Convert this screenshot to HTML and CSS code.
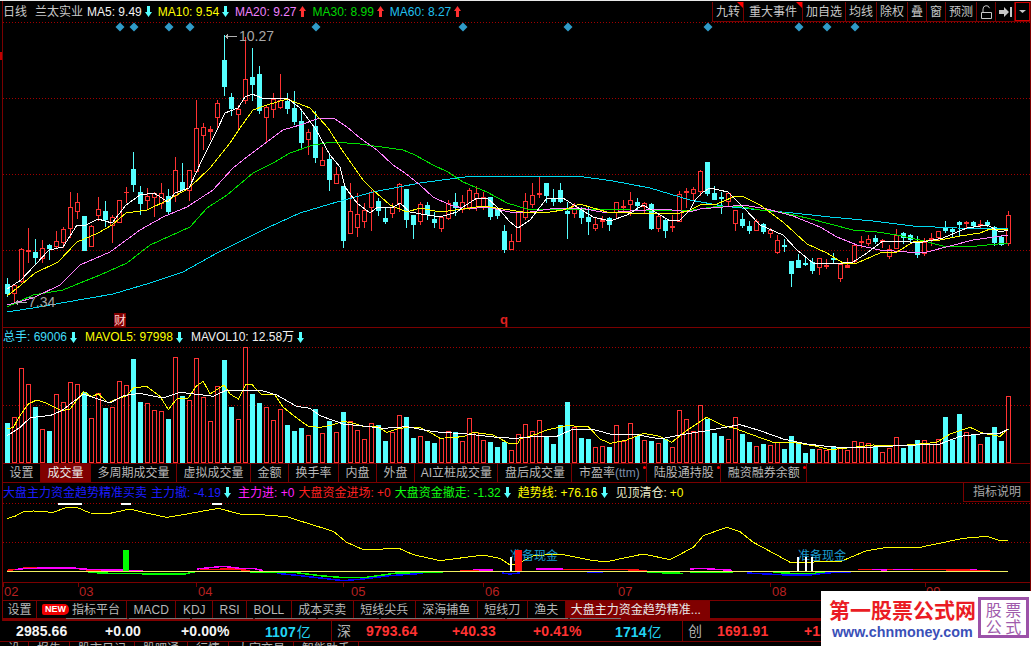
FILE: index.html
```html
<!DOCTYPE html>
<html lang="zh">
<head>
<meta charset="utf-8">
<title>兰太实业 日线</title>
<link rel="stylesheet" href="styles.css">
</head>
<body>
<svg class="defs" width="0" height="0" aria-hidden="true">
  <symbol id="arr" viewBox="0 0 7 11"><path d="M2 0h3v6h2L3.500 11 0 6h2z"/></symbol>
</svg>
<div class="page">
  <div class="topline"></div>
  <div class="left-mark"></div>
  <div class="main">
    <header class="head">
      <div class="legend">
        <span class="plain">日线</span><span class="plain name">兰太实业</span>
        <span class="item white">MA5: 9.49<svg class="arrow cyan"><use href="#arr"/></svg></span>
        <span class="item yellow">MA10: 9.54<svg class="arrow cyan"><use href="#arr"/></svg></span>
        <span class="item pink">MA20: 9.27<svg class="arrow up"><use href="#arr"/></svg></span>
        <span class="item green">MA30: 8.99<svg class="arrow up"><use href="#arr"/></svg></span>
        <span class="item sky">MA60: 8.27<svg class="arrow up"><use href="#arr"/></svg></span>
      </div>
      <div class="btns">
        <span class="btn flag">九转</span>
        <span class="btn btn-wide flag">重大事件</span>
        <span class="btn">加自选</span>
        <span class="btn">均线</span>
        <span class="btn">除权</span>
        <span class="btn">叠</span>
        <span class="btn">窗</span>
        <span class="btn">预测</span>
        <span class="btn btn-icon"><svg class="ico" viewBox="0 0 13 14"><path d="M1.500 7.500h10v6h-10zM3 7.500V4a3.300 3.300 0 0 1 6.500-.8" /></svg></span>
        <span class="btn btn-icon"><svg class="ico-solid" viewBox="0 0 13 10"><path d="M0 3h5V0l5 5-5 5V7H0zM11 0h2v10h-2z"/></svg></span>
        <span class="btn btn-drop"><svg class="ico-drop" viewBox="0 0 7 3"><path d="M0 0h7L3.500 3z"/></svg></span>
      </div>
    </header>
    <svg id="price" class="chart chart-price" viewBox="3 22 1027 305"></svg>

    <div class="legend legend-vol">
      <span class="item cyan">总手: 69006<svg class="arrow cyan"><use href="#arr"/></svg></span>
      <span class="item yellow">MAVOL5: 97998<svg class="arrow cyan"><use href="#arr"/></svg></span>
      <span class="item white">MAVOL10: 12.58万<svg class="arrow cyan"><use href="#arr"/></svg></span>
    </div>
    <svg id="vol" class="chart chart-vol" viewBox="3 346 1027 118"></svg>

    <nav class="tabs">
      <span class="tab">设置</span>
      <span class="tab on">成交量</span>
      <span class="tab">多周期成交量</span>
      <span class="tab">虚拟成交量</span>
      <span class="tab">金额</span>
      <span class="tab">换手率</span>
      <span class="tab">内盘</span>
      <span class="tab">外盘</span>
      <span class="tab tab-tight">AI立桩成交量</span>
      <span class="tab">盘后成交量</span>
      <span class="tab dot">市盈率<i class="dim">(ttm)</i></span>
      <span class="tab dot">陆股通持股</span>
      <span class="tab dot">融资融券余额</span>
    </nav>

    <div class="indhead">
      <div class="legend legend-ind">
        <span class="ititle blue">大盘主力资金趋势精准买卖</span>
        <span class="item blue after-a">主力撤: -4.19<svg class="arrow cyan"><use href="#arr"/></svg></span>
        <span class="item magenta">主力进: +0</span>
        <span class="item red">大盘资金进场: +0</span>
        <span class="item lime after-b">大盘资金撤走: -1.32<svg class="arrow cyan"><use href="#arr"/></svg></span>
        <span class="item yellow after-c">趋势线: +76.16<svg class="arrow cyan"><use href="#arr"/></svg></span>
        <span class="item cream">见顶清仓: <b class="yellow thin">+0</b></span>
      </div>
      <span class="explain">指标说明</span>
    </div>
    <svg id="ind" class="chart chart-ind" viewBox="3 503 1027 80"></svg>
    <svg id="axis" class="chart chart-axis" viewBox="3 583 1027 18"></svg>

    <nav class="tabs tabs-bottom">
      <span class="tab tab-b tab-first">设置</span>
      <span class="tab tab-b tab-new"><em class="new">NEW</em>指标平台</span>
      <span class="tab tab-b">MACD</span>
      <span class="tab tab-b">KDJ</span>
      <span class="tab tab-b">RSI</span>
      <span class="tab tab-b">BOLL</span>
      <span class="tab tab-b">成本买卖</span>
      <span class="tab tab-b">短线尖兵</span>
      <span class="tab tab-b">深海捕鱼</span>
      <span class="tab tab-b">短线刀</span>
      <span class="tab tab-b">渔夫</span>
      <span class="tab tab-b on on-white">大盘主力资金趋势精准...</span>
    </nav>
    <div class="scroll"><div class="thumb"></div></div>
  </div>

  <div class="status">
    <span class="val wht">2985.66</span>
    <span class="val wht">+0.00</span>
    <span class="val wht">+0.00%</span>
    <span class="val cy">1107<i class="yi">亿</i></span>
    <span class="mkt">深</span>
    <span class="val rd">9793.64</span>
    <span class="val rd">+40.33</span>
    <span class="val rd">+0.41%</span>
    <span class="val cy">1714<i class="yi">亿</i></span>
    <span class="mkt">创</span>
    <span class="val rd">1691.91</span>
    <span class="val rd">+12.60</span>
  </div>
  <div class="foot">
    <span class="fc">设</span><span class="fc">报告</span><span class="fc">股市日记</span><span class="fc">股吧通</span><span class="fc">行情</span><span class="fc">大宗交易</span><span class="fc">智能助手</span>
  </div>

  <aside class="mark">
    <div class="mark-text">
      <div class="mark-title">第一股票公式网</div>
      <div class="mark-url">www.chnmoney.com</div>
    </div>
    <div class="mark-box"><span>股 票</span><span>公 式</span></div>
  </aside>
</div>
<script src="chart.js"></script>
</body>
</html>
```

FILE: styles.css
```css
* { box-sizing: border-box; }
html, body { margin: 0; padding: 0; background: #000; }
body { font: 12px/1 "Liberation Sans", "Noto Sans CJK SC", sans-serif; color: #c8c8c8; }
.defs { position: absolute; }
.page { position: relative; width: 1031px; height: 646px; overflow: hidden; background: #000; }
.topline { height: 1px; background: #e8e8e8; }
.left-mark { position: absolute; left: 0; top: 52px; width: 2px; height: 8px; background: #c00000; }

.main { margin-left: 2px; border-left: 1px solid #7a0000; border-right: 1px solid #7a0000; width: 1029px; height: 620px; }
.head { height: 21px; display: flex; justify-content: space-between; }
.legend { display: flex; align-items: center; white-space: nowrap; }
.head .legend { gap: 6px; }
.plain { color: #c8c8c8; }
.name { margin-left: 2px; margin-right: -2px; }
.item { display: inline-flex; align-items: center; gap: 3px; }
.arrow { width: 7px; height: 11px; fill: #ff3030; }
.arrow.cyan { fill: #55ffff; }
.arrow.up { transform: rotate(180deg); }
.white { color: #f2f2f2; }
.yellow { color: #ffff00; }
.pink { color: #f080ff; }
.green { color: #00d800; }
.sky { color: #20c0f0; }
.cyan { color: #40dcf8; }
.blue { color: #1c1cff; }
.magenta { color: #ff20ff; }
.red { color: #ff2020; }
.lime { color: #10ff10; }
.cream { color: #e8e8c8; }
.thin { font-weight: 400; }

.btns { display: flex; height: 20px; margin-top: 1px; border-left: 1px solid #7a0000; border-bottom: 1px solid #7a0000; }
.btn { position: relative; display: flex; align-items: center; justify-content: center; padding: 0 3px; border-right: 1px solid #7a0000; color: #c8c8c8; }
.btn-wide { padding: 0 5px; }
.flag::after { content: ""; position: absolute; top: 0; right: 0; border-top: 6px solid #ff0000; border-left: 6px solid transparent; }
.btn-icon { width: 19px; padding: 0; }
.btn-drop { width: 15px; padding: 0; border: 1px solid #d00000; }
.ico { width: 13px; height: 14px; fill: none; stroke: #c8c8c8; stroke-width: 1; }
.ico-solid { width: 13px; height: 10px; fill: #c8c8c8; }
.ico-drop { width: 7px; height: 3px; fill: #c8c8c8; }

.chart { display: block; width: 1027px; }
.chart-price { height: 305px; }
.chart-vol { height: 118px; }
.chart-ind { height: 80px; }
.chart-axis { height: 18px; }

.legend-vol { height: 18px; gap: 8px; border-top: 1px solid #7a0000; padding-top: 1px; }
.legend-ind { gap: 4px; }
.after-a { margin-right: 3px; }
.after-b { margin-right: 3px; }
.after-c { margin-right: 4px; }

.tabs { display: flex; height: 20px; border-top: 1px solid #7a0000; border-bottom: 1px solid #7a0000; }
.tab { position: relative; display: flex; align-items: center; padding: 0 6.500px; border-right: 1px solid #7a0000; color: #b8b8b8; white-space: nowrap; }
.tab-tight { padding: 0 5.500px; }
.tab.on { background: #800000; color: #e8e8e8; }
.dim { font-style: normal; color: #7c8ca8; }
.dot::after { content: ""; position: absolute; top: 2px; right: 0; width: 3px; height: 3px; border-radius: 50%; background: #ff0000; }
.indhead { height: 19px; display: flex; justify-content: space-between; align-items: flex-start; }
.indhead .legend { height: 19px; }
.explain { width: 67px; height: 20px; margin-top: -1px; display: flex; align-items: center; justify-content: center; border: 1px solid #7a0000; border-right: 0; color: #a8a8a8; }

.tabs-bottom { height: 18px; border-bottom: 0; }
.tab-first { padding: 0 4.500px; }
.tab-new { padding: 0 6px 0 5px; gap: 3px; }
.on-white { width: 144px; padding: 0 0 0 5px; color: #f4f4f4; border-right: 0; }
.new { display: inline-block; width: 27px; height: 11px; border-radius: 2px 5px 5px 2px; background: #f00000; color: #fff; font: 700 9px/11px "Liberation Sans", sans-serif; text-align: center; }
.scroll { height: 3px; background: #800000; }
.thumb { margin-left: 63px; width: 555px; height: 1px; background: repeating-linear-gradient(90deg, #777 0 61px, #222 61px 63px); }

.status { height: 21px; display: grid; grid-template-columns: 89px 76px 84px 66px 35px 86px 81px 82px 67px 35px 87px 1fr; padding-left: 16px; align-items: center; border-bottom: 1px solid #7a0000; white-space: nowrap; }
.val { font: 700 14px/1 "Liberation Sans", sans-serif; letter-spacing: 0.100px; }
.wht { color: #f4f4f4; }
.rd { color: #ff3232; }
.cy { color: #22d4f4; }
.yi { font: 400 14px/1 "Noto Sans CJK SC", sans-serif; margin-left: 1px; }
.mkt { height: 20px; display: flex; align-items: center; padding-left: 5px; border-left: 1px solid #7a0000; font-size: 14px; color: #b0b0b0; }
.foot { height: 4px; display: flex; overflow: hidden; color: #b0b0b0; }
.fc { padding: 1px 8px 0; border-right: 1px solid #7a0000; white-space: nowrap; }

.mark { position: absolute; left: 821px; top: 591px; width: 210px; height: 55px; display: flex; background: #fff; padding: 6px 2px 0 8px; justify-content: space-between; }
.mark-text { width: 148px; }
.mark-title { font: 700 21px/24px "Noto Sans CJK SC", sans-serif; color: #ea1c24; white-space: nowrap; }
.mark-url { margin-top: 2px; padding-left: 3px; font: 700 14.300px/18px "Liberation Sans", sans-serif; color: #3a50b8; white-space: nowrap; }
.mark-box { width: 51px; height: 41px; border: 3px solid #9c52a8; display: flex; flex-direction: column; align-items: center; justify-content: center; color: #a05cac; font: 400 16px/17px "Noto Sans CJK SC", sans-serif; white-space: nowrap; }

/* chart primitives, created by chart.js */
.crisp { shape-rendering: crispEdges; }
.dots { stroke: #a00000; stroke-width: 1; stroke-dasharray: 1 2; }
.rule { stroke: #7a0000; stroke-width: 1; }
.up-body { fill: #000; stroke: #ff3232; stroke-width: 1; }
.up-wick { stroke: #ff3232; stroke-width: 1; }
.up-fill { fill: #ff3232; }
.dn-body { fill: #55ffff; }
.dn-wick { stroke: #55ffff; stroke-width: 1; }
.ln { fill: none; stroke-width: 1; }
.ln-white { stroke: #fff; }
.ln-yellow { stroke: #ffff00; }
.ln-pink { stroke: #ff80ff; }
.ln-green { stroke: #00e000; }
.ln-sky { stroke: #00d8f0; }
.ln-red { stroke: #ff1010; stroke-width: 1.500; }
.ln-mag { stroke: #ff00ff; stroke-width: 1.500; }
.ln-lime { stroke: #00ff00; stroke-width: 1.500; }
.ln-blue { stroke: #0000ff; stroke-width: 1.500; }
.base { stroke: #f0f060; stroke-width: 1.500; }
.diamond { fill: #2f9bc8; }
.lbl { font: 14px "Liberation Sans", sans-serif; fill: #a8a8a8; }
.lbl-arrow { stroke: #b0b0b0; fill: none; }
.cai-bg { fill: #800000; }
.cai { font: 12px "Noto Sans CJK SC", sans-serif; fill: #ffd0d0; }
.q { font: 700 13px "Liberation Sans", sans-serif; fill: #e02020; }
.cash { font: 12px "Noto Sans CJK SC", sans-serif; fill: #1a9ccf; }
.bar-w { fill: #fff; }
.bar-g { fill: #00ff00; }
.bar-r { fill: #ff1010; }
.axis-t { font: 13px "Liberation Sans", sans-serif; fill: #b82020; }
```

FILE: chart.js
```js
const NS = 'http://www.w3.org/2000/svg';
function el(parent, tag, cls, attrs, text) {
  const n = document.createElementNS(NS, tag);
  n.setAttribute('class', cls);
  for (const k in attrs) n.setAttribute(k, attrs[k]);
  if (text) n.textContent = text;
  parent.appendChild(n);
  return n;
}
function dots(svg, y) {
  el(svg, 'line', 'dots crisp', { x1: 3, x2: 1030, y1: y + 0.5, y2: y + 0.5 });
}
function poly(svg, cls, pts) {
  el(svg, 'polyline', 'ln crisp ' + cls, { points: pts.map(p => p[0] + ',' + p[1]).join(' ') });
}
function zoomPts(list, ox, oy) {
  const out = [];
  for (let i = 0; i < list.length; i += 2) out.push([ox + list[i] / 3, oy + list[i + 1] / 3]);
  return out;
}

/* candles: [up, high, top, bottom, low] */
const z = (base, rows) => rows.map(r => [r[0], base + r[1] / 3, base + r[2] / 3, base + r[3] / 3, base + r[4] / 3]);
const candles = z(130, [
[0,445,462,488,498],[1,462,464,490,515],[1,355,357,452,455],[1,295,360,362,395],[0,328,366,381,398],
[1,330,355,383,395],[0,343,345,353,386],[1,302,334,347,352],[1,292,298,335,352],[1,186,232,295,320],
[1,190,217,242,263],[0,258,258,359,359],[1,285,289,347,347],[1,201,238,254,270],[0,213,243,267,288],
[1,255,262,285,335],[1,211,211,275,275],[1,172,185,187,217],[0,67,118,163,183],[0,168,186,218,252],
[1,173,198,211,235],[1,187,188,202,258],[1,160,190,220,233],[0,178,198,243,252],[1,82,121,195,213],
[0,100,157,177,180],[1,120,121,180,210]]).concat([
[1,100,128,171,172],[1,123,127,135,149],[1,126,129,131,139],[1,100,103,117,128],[0,35,60,86,95],
[0,93,97,108,115],[1,105,109,114,128],[1,37,79,100,103],[0,48,77,84,100],[0,66,74,110,113],
[1,105,107,117,141],[1,93,99,109,117],[1,74,100,107,108],[0,93,101,108,113],[0,91,108,121,124],
[0,111,121,142,147],[1,129,132,139,154],[0,111,126,157,162],[1,147,160,165,165],[0,154,159,179,190],
[1,167,174,183,183]]).concat(z(150, [
[0,108,108,270,290],[1,100,183,250,250],[1,130,192,230,258],[1,160,180,212,232],[1,120,126,170,240],
[0,143,153,180,195],[0,175,204,212,220],[1,160,170,188,200],[1,100,103,160,183],[0,117,117,207,232],
[0,195,195,222,264],[1,155,162,212,222],[0,155,165,192,208],[0,187,207,216,232],[1,197,202,233,242],
[1,150,158,203,208],[0,128,155,172,195],[1,135,157,178,185],[1,113,121,172,178],[1,108,130,143,180],
[1,125,142,172,178],[0,140,142,198,206],[0,170,177,195,205],[0,225,243,297,305],[1,252,273,296,296],
[1,185,187,272,272],[1,130,153,202,208],[1,100,135,162,170],[1,82,129,132,140],[0,98,98,135,155],
[0,118,147,152,165],[0,98,120,153,155],[0,155,182,188,264],[1,160,165,190,200],[0,170,178,202,218],
[0,170,201,213,252],[1,205,223,233,240],[1,198,207,212,232],[0,200,204,221,240],[1,156,157,185,205],
[1,150,167,170,180],[1,127,150,163,195],[0,145,156,165,180],[1,155,158,168,190],[0,160,163,234,238],
[1,195,198,235,243],[0,207,210,240,260],[1,195,229,232,242],[1,123,133,212,212],[1,115,123,127,170],
[1,110,118,128,150],[1,60,63,122,135],[0,36,36,130,135],[0,108,130,146,146],[0,127,142,144,188],
[1,125,130,152,165],[1,180,180,220,240],[0,190,208,225,232],[0,213,228,240,248],[1,208,214,240,240],
[0,220,222,243,248],[1,235,241,250,260],[1,255,271,307,308],[0,268,285,287,302],[0,334,334,369,407],
[0,312,331,350,350],[0,325,340,342,345],[0,325,337,360,370],[1,325,325,350,372],[1,326,345,348,354],
[0,310,325,327,340],[1,340,343,384,392],[1,325,345,350,350],[1,285,286,333,336],[1,258,272,275,292],
[1,255,268,278,285],[0,256,264,273,280],[1,266,270,272,290],[1,285,298,317,323],[1,238,256,295,295],
[0,246,250,262,278],[0,252,256,268,275],[0,258,275,311,320],[1,265,275,308,316],[1,250,263,271,285],
[1,243,244,261,270],[0,213,230,240,246],[0,230,236,243,262],[0,212,216,221,255],[1,212,217,220,234],
[0,212,216,224,232],[1,210,221,226,232],[0,210,216,222,228],[0,227,230,275,285],[0,258,261,283,286],
[1,183,196,280,285]]));

const MA = {
'ln-sky': [[7,312],[33,308],[67,302],[113,294],[150,283],[183,272],[217,253],[267,228],[300,213],[330,204],[373,192],[420,183],[457,178],[473,176],[577,176],[613,181],[650,188],[690,200],[723,206],[760,210],[793,213],[830,217],[873,221],[913,226],[957,228],[1008,229]],
'ln-green': [[7,307],[33,295],[63,290],[80,283],[100,275],[127,263],[150,245],[190,227],[207,208],[227,195],[253,173],[273,163],[290,153],[313,145],[333,142],[360,144],[403,150],[415,155],[433,165],[448,172],[463,182],[487,192],[507,203],[527,209],[563,210],[597,209],[630,210],[667,211],[693,210],[713,207],[737,206],[760,210],[780,212],[807,218],[830,224],[853,230],[877,232],[897,235],[920,240],[943,246],[977,246],[1008,243]],
'ln-pink': [[7,305],[33,298],[60,285],[80,265],[110,252],[140,230],[163,217],[187,207],[213,190],[233,168],[243,160],[267,142],[283,130],[300,125],[320,118],[335,119],[347,127],[360,138],[377,150],[393,165],[405,173],[420,185],[433,197],[450,205],[467,209],[487,207],[510,212],[530,212],[550,209],[580,208],[607,213],[630,211],[663,209],[690,212],[700,209],[723,207],[743,205],[767,209],[793,216],[820,227],[837,237],[857,245],[880,250],[907,252],[927,252],[950,246],[973,240],[1008,235]],
'ln-yellow': [[7,296],[21,285],[35,273],[58,262],[77,242],[98,233],[112,225],[126,213],[147,210],[168,200],[189,188],[210,168],[230,143],[240,128],[253,110],[267,105],[287,99],[310,108],[328,128],[342,150],[363,180],[373,190],[390,205],[407,212],[420,208],[440,212],[463,209],[483,206],[503,209],[523,212],[550,212],[563,210],[580,204],[593,208],[607,212],[630,213],[663,213],[677,214],[690,210],[700,205],[717,204],[733,197],[742,196],[760,205],[783,222],[807,244],[827,253],[843,263],[857,263],[880,253],[897,252],[913,242],[940,240],[960,236],[980,233],[990,229],[1008,229]],
'ln-white': [[7,289],[21,280],[35,265],[49,250],[63,247],[77,225],[84,226],[98,219],[112,223],[126,205],[140,195],[154,193],[168,202],[175,193],[189,188],[203,158],[217,130],[225,113],[238,108],[245,97],[252,94],[262,98],[273,98],[287,98],[300,108],[315,128],[330,155],[340,167],[345,187],[357,203],[370,213],[378,207],[392,208],[400,203],[410,212],[427,215],[440,217],[457,212],[463,207],[477,198],[487,198],[497,207],[510,222],[518,228],[530,220],[547,198],[563,198],[577,207],[593,217],[610,221],[627,215],[643,205],[657,213],[670,221],[680,220],[690,210],[695,200],[703,192],[710,188],[728,192],[743,207],[760,225],[783,235],[797,250],[813,263],[843,263],[853,262],[867,253],[883,241],[910,242],[923,242],[943,238],[967,228],[987,225],[1000,232],[1008,230]]
};

function drawCandle(svg, c, i) {
  const [up, hi, top, bot, lo] = c;
  const x = 5 + 7 * i, mid = x + 2.5;
  const t = Math.round(top), b = Math.round(bot);
  const wick = up ? 'up-wick crisp' : 'dn-wick crisp';
  el(svg, 'line', wick, { x1: mid, x2: mid, y1: Math.round(hi), y2: Math.round(lo) + 1 });
  if (b - t < 3) {
    el(svg, 'rect', (up ? 'up-fill' : 'dn-body') + ' crisp', { x: x, y: t, width: 5, height: Math.max(1, b - t + 1) });
  } else if (up) {
    el(svg, 'rect', 'up-body crisp', { x: x + 0.5, y: t + 0.5, width: 4, height: b - t });
  } else {
    el(svg, 'rect', 'dn-body crisp', { x: x, y: t, width: 5, height: b - t + 1 });
  }
}

/* price panel */
const price = document.getElementById('price');
[22, 98, 174, 250].forEach(y => dots(price, y));
candles.forEach((c, i) => drawCandle(price, c, i));
Object.keys(MA).forEach(k => poly(price, k, MA[k]));
[120, 134, 169, 190, 316, 463, 568, 708, 799, 827, 855].forEach(x => {
  el(price, 'path', 'diamond', { d: 'M' + x + ' 22.500l4.500 4.500-4.500 4.500-4.500-4.500z' });
});
el(price, 'path', 'lbl-arrow crisp', { d: 'M225.500 36.500H237M228 34.500l-2.500 2 2.500 2' });
el(price, 'text', 'lbl', { x: 239, y: 41 }, '10.27');
el(price, 'path', 'lbl-arrow crisp', { d: 'M15 302.500H27M18 300.500l-2.500 2 2.500 2' });
el(price, 'text', 'lbl', { x: 28, y: 307 }, '7.34');
el(price, 'rect', 'cai-bg crisp', { x: 114, y: 313, width: 12, height: 14 });
el(price, 'text', 'cai', { x: 114, y: 325 }, '财');
el(price, 'text', 'q', { x: 500, y: 324 }, 'q');

/* volume panel: tops in 3x zoom units, [up, top] */
const vol = document.getElementById('vol');
[348, 406].forEach(y => dots(vol, y));
const volA = 'c312 r295 r148 r196 c264 r331 c336 r226 r250 r190 r196 c220 r298 r223 c267 r265 r187 r199 c120 c249 r253 r274 r277 c300 r115 c231 r244 r118 r234 r307 r202 c123 c264 r301 r85 c225 c252 r265 r304 r271 c318 c336 c327 r349 c270 r343 c306 r340 c279 r307 r334 r361 r313 c318 c366 r340 r289 c294 c357 r352 c366 c372 r358 r337 c340 r367 r298 r340 r364 c369 c384 c369 r394 r346'.split(' ');
const volB = 'r136 r157 r124 c172 c195 c138 c70 r143 c177 c181 r205 r202 c205 r139 r187 r133 c171 r184 c186 r192 c180 r205 r92 r121 r156 r79 c120 c162 c171 r181 r115 c165 c189 r202 c195 r198 r190 c210 c172 c190 c222 c210 r210 r213 c204 r204 r213 r187 r190 r193 c202 r220 r208 r175 c207 c195 c183 r184 r195 r181 c114 c183 c105 r160 c166 r195 c174 c144 c186 r52'.split(' ');
const bars = volA.map(s => [s[0], Math.round(320 + +s.slice(1) / 3)]).concat(volB.map(s => [s[0], Math.round(380 + +s.slice(1) / 3)]));
bars.forEach((b, i) => {
  const x = 5 + 7 * i;
  if (b[0] === 'r') el(vol, 'rect', 'up-body crisp', { x: x + 0.5, y: b[1] + 0.5, width: 4, height: 463 - b[1] });
  else el(vol, 'rect', 'dn-body crisp', { x: x, y: b[1], width: 5, height: 464 - b[1] });
});
poly(vol, 'ln-yellow', zoomPts([22,330,40,325,60,290,85,255,110,243,140,253,185,275,210,270,250,218,275,232,295,225,325,252,350,240,380,230,400,207,440,202,480,232,505,272,530,240,565,237,590,200,610,187,630,225,672,198,690,225,715,240,737,197,757,198,785,227,825,228,850,265,890,297,925,322,960,325,1000,317,1030,307,1060,313,1090,322,1130,322,1160,340,1190,330,1220,325,1260,325,1290,340,1320,358,1390,353,1420,340,1480,348,1530,375,1555,372], 0, 320)
  .concat(zoomPts([0,180,50,165,80,153,140,140,205,143,240,180,270,193,320,183,370,163,420,172,455,190,500,155,560,115,610,140,650,150,690,165,760,190,820,190,880,200,930,212,1000,205,1060,198,1140,200,1220,193,1250,190,1290,165,1350,145,1390,163,1440,172,1465,150], 520, 380)));
poly(vol, 'ln-white', zoomPts([22,350,60,325,90,297,120,292,150,290,185,275,250,225,330,252,370,230,420,223,490,237,540,220,600,227,640,232,680,213,780,213,830,228,890,262,930,268,960,290,1030,315,1100,322,1150,328,1220,323,1300,338,1400,345,1500,356,1555,358], 0, 320)
  .concat(zoomPts([0,175,60,173,110,172,160,150,215,150,270,165,340,165,420,180,480,168,560,155,660,137,720,155,790,180,860,195,930,203,1000,207,1140,200,1260,195,1320,172,1380,165,1440,163,1465,150], 520, 380)));

/* indicator panel */
const ind = document.getElementById('ind');
[504, 543].forEach(y => dots(ind, y));
[[58, 24], [121, 10], [212, 10]].forEach(m => el(ind, 'rect', 'bar-w crisp', { x: m[0], y: 504, width: m[1], height: 2 }));
const lo = (c, list, ox, oy) => poly(ind, c, zoomPts(list, ox, oy));
lo('ln-lime', [265,280,330,283,480,285,555,285,585,278], 0, 480);
lo('ln-lime', [750,280,880,280,960,290,1030,296,1100,295,1190,282,1330,280], 0, 480);
lo('ln-lime', [380,160,490,163], 520, 520);
lo('ln-lime', [490,158,640,160], 520, 520);
lo('ln-lime', [760,160,850,165,930,160], 520, 520);
lo('ln-blue', [830,283,900,290,1030,305,1090,300,1170,290,1270,283], 0, 480);
lo('ln-blue', [1505,282,1530,285,1560,282], 0, 480);
lo('ln-blue', [200,159,250,160], 520, 520);
lo('ln-blue', [680,162,800,168,870,168,920,162,1000,158], 520, 520);
lo('ln-red', [22,274,60,270,80,265,115,267,225,267,250,272,330,275,350,277], 0, 480);
lo('ln-red', [600,272,700,270,750,275], 0, 480);
lo('ln-red', [1380,274,1480,274], 0, 480);
lo('ln-red', [130,152,215,151,300,151,380,155], 520, 520);
lo('ln-red', [1015,152,1265,152,1410,155], 520, 520);
lo('ln-mag', [45,272,80,268,220,267,245,270,290,272,380,274,430,275], 0, 480);
lo('ln-mag', [590,270,670,262,720,268,760,268,790,275], 0, 480);
lo('ln-mag', [1420,272,1480,273], 0, 480);
lo('ln-mag', [48,150,130,150], 520, 520);
lo('ln-mag', [510,150,540,148,590,151,635,154], 520, 520);
lo('ln-mag', [1055,151,1100,153], 520, 520);
lo('ln-mag', [1120,151,1180,151], 520, 520);
lo('ln-mag', [1350,151,1370,152], 520, 520);
el(ind, 'line', 'base crisp', { x1: 7, x2: 1008, y1: 572.5, y2: 572.5 });
el(ind, 'rect', 'bar-g crisp', { x: 123, y: 551, width: 6, height: 21 });
poly(ind, 'ln-yellow', zoomPts([22,118,45,112,70,98,100,96,160,100,200,85,235,87,270,102,330,103,390,90,430,100,500,115,560,105,655,88,720,105,780,107,860,113,920,132,1000,157,1040,190,1090,212,1150,210,1195,207,1240,227,1320,245,1420,232,1450,228,1500,238,1530,258,1560,256], 0, 480)
  .concat(zoomPts([0,130,40,110,120,105,220,125,260,128,370,105,450,122,520,85,550,50,620,25,660,38,700,70,780,113,810,130,960,128,1040,95,1100,85,1200,85,1330,58,1400,52,1440,65,1465,65], 520, 520)));
el(ind, 'text', 'cash', { x: 510, y: 561 }, '准备现金');
el(ind, 'text', 'cash', { x: 798, y: 561 }, '准备现金');
el(ind, 'rect', 'bar-w crisp', { x: 510, y: 558, width: 2, height: 14 });
el(ind, 'rect', 'bar-r crisp', { x: 515, y: 551, width: 7, height: 21 });
[797, 805, 811].forEach(x => el(ind, 'rect', 'bar-w crisp', { x: x, y: 558, width: 2, height: 14 }));

/* time axis */
const axis = document.getElementById('axis');
el(axis, 'line', 'rule crisp', { x1: 3, x2: 1030, y1: 583.5, y2: 583.5 });
[[3, 4, '02'], [78, 79, '03'], [196, 198, '04'], [343, 351, '05'], [483, 485, '06'], [617, 618, '07'], [770, 772, '08'], [925, 926, '09']].forEach(t => {
  el(axis, 'line', 'rule crisp', { x1: t[0] + 0.5, x2: t[0] + 0.5, y1: 584, y2: 588 });
  el(axis, 'text', 'axis-t', { x: t[1], y: 597 }, t[2]);
});
```
